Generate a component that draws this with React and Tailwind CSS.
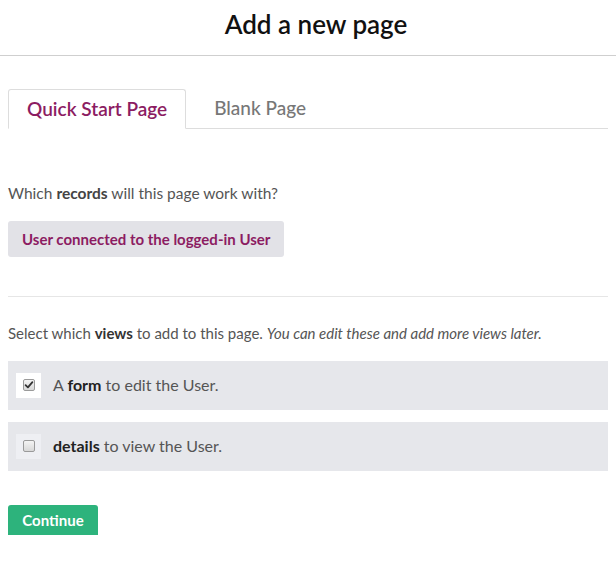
import { useState } from 'react';

const font = { fontFamily: 'Lato, "Open Sans", sans-serif' };

// 예전 스타일 회색 체크박스
const Check = ({ checked, onChange }) => (
  <span className="relative w-[12px] h-[12px]">
    <input
      type="checkbox"
      checked={checked}
      onChange={onChange}
      className="appearance-none block w-[12px] h-[12px] rounded-[2px] border border-[#9a9a9a] bg-gradient-to-b from-[#f4f4f4] to-[#d8d8d8]"
    />
    {checked && (
      <svg viewBox="0 0 12 12" className="absolute inset-0 w-[12px] h-[12px] pointer-events-none">
        <path d="M2.6 6.2 L4.9 8.4 L9.4 3.2" fill="none" stroke="#333" strokeWidth="1.8" strokeLinecap="round" strokeLinejoin="round" />
      </svg>
    )}
  </span>
);

const ViewRow = ({ checked, onToggle, children }) => (
  <label className="flex items-center h-[49px] bg-[#e6e7eb] cursor-pointer">
    <span className={'ml-[8px] w-[25px] h-[25px] flex items-center justify-center ' + (checked ? 'bg-white' : 'bg-[#eeeff3]')}>
      <Check checked={checked} onChange={onToggle} />
    </span>
    <span className="ml-[12px] text-[16px] text-[#555]">{children}</span>
  </label>
);

export default function App() {
  const [tab, setTab] = useState(0);
  const [form, setForm] = useState(true);
  const [details, setDetails] = useState(false);

  return (
    <div className="w-[616px] h-[587px] bg-white overflow-hidden" style={font}>
      <div className="h-[56px] border-b border-[#cfcfcf] flex items-center justify-center pl-[16px]">
        <h1 className="text-[26px] font-semibold text-[#111] -mt-[6px]">Add a new page</h1>
      </div>

      <div className="px-2">
        {/* tabs */}
        <div className="flex mt-[33px] h-[40px]">
          <button
            onClick={() => setTab(0)}
            className={
              'px-[18px] h-full text-[19px] font-semibold rounded-t-[3px] ' +
              (tab === 0 ? 'border border-[#ddd] border-b-white text-[#8c1c62]' : 'border-b border-[#ddd] text-[#777]')
            }
          >
            Quick Start Page
          </button>
          <button
            onClick={() => setTab(1)}
            className={
              'px-[28px] h-full text-[19px] font-medium rounded-t-[3px] ' +
              (tab === 1 ? 'border border-[#ddd] border-b-white text-[#8c1c62]' : 'border-b border-[#ddd] text-[#777]')
            }
          >
            Blank Page
          </button>
          <div className="flex-1 border-b border-[#ddd]" />
        </div>

        <p className="mt-[53px] text-[15.5px] text-[#555]">
          Which <b className="text-[#444]">records</b> will this page work with?
        </p>

        <button className="mt-[16px] h-[36px] px-[14px] rounded-[3px] bg-[#e2e2e7] text-[15px] font-bold text-[#8c1c62]">
          User connected to the logged-in User
        </button>

        <div className="mt-[39px] border-t border-[#e6e6e6]" />

        <p className="mt-[25px] text-[15px] text-[#555]">
          Select which <b className="text-[#333]">views</b> to add to this page. <i>You can edit these and add more views later.</i>
        </p>

        <div className="mt-[16px] flex flex-col gap-[12px]">
          <ViewRow checked={form} onToggle={() => setForm(!form)}>
            A <b className="text-[#222]">form</b> to edit the User.
          </ViewRow>
          <ViewRow checked={details} onToggle={() => setDetails(!details)}>
            <b className="text-[#222]">details</b> to view the User.
          </ViewRow>
        </div>

        <button className="mt-[34px] w-[90px] h-[30px] rounded-t-[3px] bg-[#2db37c] text-white text-[15px] font-bold">
          Continue
        </button>
      </div>
    </div>
  );
}
